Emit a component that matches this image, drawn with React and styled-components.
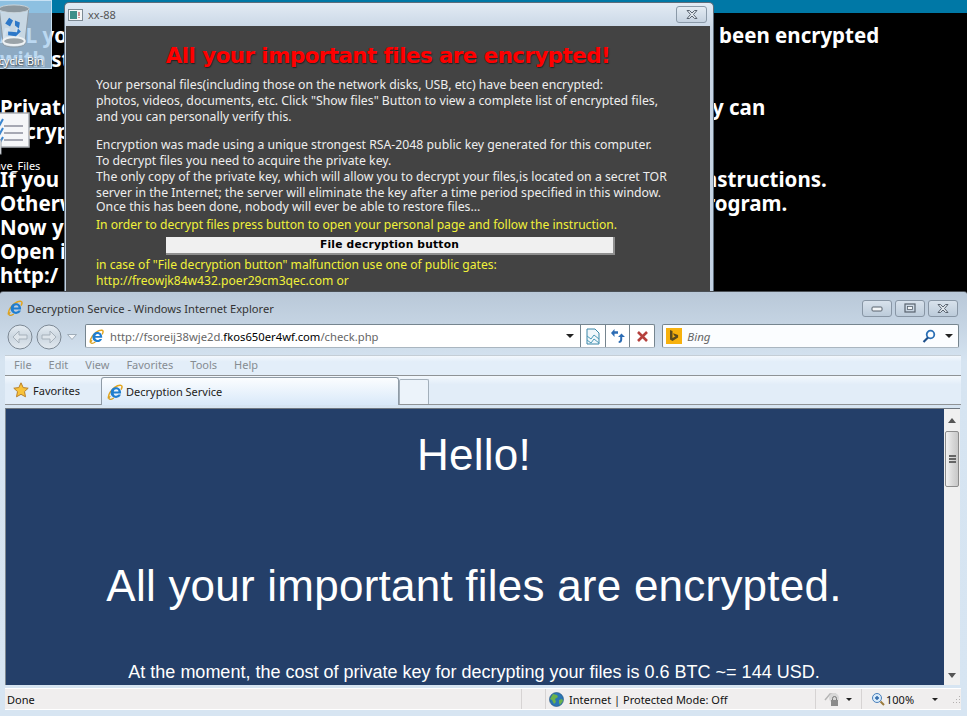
import styled, { createGlobalStyle } from 'styled-components';

const GlobalStyle = createGlobalStyle`
  html, body { margin: 0; padding: 0; background: #000; }
  * { box-sizing: border-box; }
`;

const uiFont = `'Noto Sans', 'DejaVu Sans', sans-serif`;

const Desktop = styled.div`
  position: relative;
  width: 967px;
  height: 716px;
  overflow: hidden;
  background: #000;
  font-family: ${uiFont};
`;

const TopStrip = styled.div`
  height: 13px;
  background: #0078a6;
`;

const BgLines = styled.div`
  padding-top: 10px;
  color: #fff;
  font: bold 20.5px/24px 'Noto Sans', sans-serif;
`;

const BgLine = styled.div`
  display: grid;
  grid-template-columns: 713px 1fr;
  height: 24px;
  white-space: nowrap;
`;

const BgRight = styled.span`
  margin-left: ${(props) => props.$shift || 0}px;
`;

const DesktopIcon = styled.div`
  position: absolute;
  left: ${(props) => props.$left}px;
  top: ${(props) => props.$top}px;
  width: 76px;
  height: ${(props) => props.$height}px;
  display: flex;
  flex-direction: column;
  align-items: center;
  color: #fff;
  font-size: 11px;
  line-height: 14px;
  text-shadow: 0 1px 2px #000;
  ${(props) => props.$selected && `
    background: rgba(172, 208, 238, 0.82);
    border: 1px solid rgba(205, 228, 246, 0.9);
  `}
`;

const DesktopLabel = styled.span`
  white-space: nowrap;
  margin: ${(props) => props.$gap}px 0 0 1px;
`;

const Dialog = styled.section`
  position: absolute;
  left: 64px;
  top: 2px;
  width: 650px;
  height: 289px;
  display: flex;
  flex-direction: column;
  padding: 0 3px 0 1px;
  background: linear-gradient(180deg, #e3ebf4 0, #c8d6e5 26px, #c2d1e2 100%);
  border: 1px solid #5d6c7a;
  border-bottom: 0;
  border-radius: 5px 5px 0 0;
`;

const DialogTitle = styled.header`
  flex: 0 0 23px;
  display: flex;
  align-items: center;
  gap: 5px;
  padding: 0 3px 0 2px;
  color: #555;
  font-size: 11px;
`;

const CloseBtn = styled.div`
  margin-left: auto;
  width: 31px;
  height: 17px;
  display: flex;
  align-items: center;
  justify-content: center;
  border: 1px solid #8a99a8;
  border-radius: 3px;
  background: linear-gradient(180deg, #e3ebf3, #c5d2e0);
`;

const DialogBody = styled.div`
  flex: 1;
  overflow: hidden;
  background: #434343;
  padding: 16px 0 0 30px;
  color: #eee;
  font-size: 12.27px;
  line-height: 16px;
  white-space: nowrap;
`;

const Heading = styled.h1`
  margin: 0 0 7px -30px;
  height: 28px;
  text-align: center;
  color: #f00;
  font: bold 21.4px/28px 'DejaVu Sans', sans-serif;
  letter-spacing: -0.55px;
  text-shadow: 1px 1px 1px #222;
`;

const Para = styled.p`
  margin: 0 0 ${(props) => props.$after || 0}px;
`;

const TightLine = styled.span`
  display: block;
  margin-top: -2px;
`;

const Notice = styled.p`
  margin: ${(props) => props.$before || 0}px 0 0;
  color: #f2f23a;
  font-size: 12.1px;
`;

const DecryptBtn = styled.div`
  width: 449px;
  height: 18px;
  margin: 4px 0 2px 70px;
  text-align: center;
  color: #000;
  background: #f0f0f0;
  border-right: 2px solid #8f8f8f;
  border-bottom: 2px solid #8f8f8f;
  font: bold 10.7px/16px 'DejaVu Sans', sans-serif;
  letter-spacing: 0.2px;
`;

const Browser = styled.section`
  position: absolute;
  left: 0;
  top: 291px;
  width: 967px;
  height: 425px;
  display: flex;
  flex-direction: column;
  background: linear-gradient(180deg, #b9c8d8 0, #c4d3e2 30px, #d6e4f1 70px, #d7e5f2 100%);
  border-top: 1px solid #4a4f55;
  border-radius: 3px 3px 0 0;
`;

const TitleRow = styled.div`
  flex: 0 0 30px;
  display: flex;
  align-items: center;
  gap: 4px;
  padding: 2px 9px 0 7px;
  color: #333;
  font-size: 11.15px;
`;

const WinButtons = styled.div`
  margin-left: auto;
  display: flex;
  gap: 3px;
`;

const WinBtn = styled.div`
  width: 30px;
  height: 17px;
  display: flex;
  align-items: center;
  justify-content: center;
  border: 1px solid #8896a5;
  border-radius: 3px;
  background: linear-gradient(180deg, #d8e2ec, #bccbda);
`;

const NavRow = styled.div`
  flex: 0 0 33px;
  display: flex;
  align-items: flex-start;
  padding: 2px 8px 0 7px;
`;

const NavButtons = styled.div`
  flex: 0 0 78px;
  display: flex;
  align-items: center;
  height: 25px;
`;

const AddressBar = styled.div`
  width: 571px;
  height: 24px;
  display: flex;
  align-items: center;
  background: #fff;
  border: 1px solid #76858f;
  border-bottom-color: #aab6c0;
  border-radius: 2px;
`;

const Url = styled.div`
  flex: 1;
  padding-left: 4px;
  color: #666;
  font-size: 11.25px;
  white-space: nowrap;
  & > b {
    font-weight: 400;
    color: #000;
  }
`;

const AddrCell = styled.div`
  flex: 0 0 ${(props) => props.$width}px;
  height: 100%;
  display: flex;
  align-items: center;
  justify-content: center;
  border-left: ${(props) => (props.$plain ? 'none' : '1px solid #76858f')};
`;

const SearchBar = styled.div`
  width: 297px;
  height: 24px;
  margin-left: 7px;
  display: flex;
  align-items: center;
  padding: 0 5px 0 3px;
  background: #fbfdff;
  border: 1px solid #76858f;
  border-bottom-color: #aab6c0;
  border-radius: 2px;
  color: #666;
  font-size: 11.5px;
  font-style: italic;
`;

const SearchText = styled.span`
  flex: 1;
  margin-left: 5px;
`;

const MenuRow = styled.nav`
  flex: 0 0 21px;
  margin: 0 6px 0 5px;
  display: flex;
  align-items: center;
  gap: 17px;
  padding: 0 0 2px 9px;
  background: linear-gradient(180deg, #f3f8fd 0, #e3eef9 30%, #e3eef9 100%);
  border-top: 1px solid #c5ced6;
  border-bottom: 1px solid #8f9396;
  color: #868c92;
  font-size: 11px;
`;

const TabRow = styled.div`
  flex: 0 0 29px;
  margin: 0 6px 0 5px;
  display: flex;
  align-items: flex-end;
  background: linear-gradient(180deg, #f3f8fd 0, #e2edf8 30%, #e2edf8 100%);
  border-bottom: 1px solid #8f9396;
  color: #222;
  font-size: 11px;
`;

const FavoritesBtn = styled.div`
  flex: 0 0 96px;
  align-self: center;
  display: flex;
  align-items: center;
  gap: 4px;
  padding-left: 8px;
`;

const ActiveTab = styled.div`
  width: 298px;
  height: 28px;
  margin-bottom: -1px;
  display: flex;
  align-items: center;
  gap: 3px;
  padding-left: 5px;
  border: 1px solid #8f9ba6;
  border-bottom: 0;
  border-radius: 3px 3px 0 0;
  background: linear-gradient(180deg, #fbfdff, #d9e9f9);
`;

const NewTab = styled.div`
  width: 30px;
  height: 25px;
  border: 1px solid #a3afba;
  border-bottom: 0;
  border-radius: 2px 2px 0 0;
  background: #ecf3fa;
`;

const PageRow = styled.div`
  flex: 0 0 277px;
  margin: 3px 7px 0 5px;
  display: flex;
  min-height: 0;
  border-top: 1px solid #6f7780;
  border-left: 1px solid #7d8790;
`;

const PageContent = styled.main`
  flex: 1;
  overflow: hidden;
  padding-right: 2px;
  background: #243f69;
  color: #fff;
  text-align: center;
  white-space: nowrap;
  font-family: 'Liberation Sans', Arial, sans-serif;
`;

const Hello = styled.div`
  margin-top: ${(props) => props.$top}px;
  font-size: 44px;
  line-height: 46px;
  letter-spacing: 0.23px;
`;

const Cost = styled.div`
  margin-top: 52px;
  font-size: 18px;
  line-height: 22px;
`;

const Scrollbar = styled.aside`
  flex: 0 0 16px;
  display: flex;
  flex-direction: column;
  align-items: center;
  background: #f0f0f0;
`;

const ScrollArrow = styled.div`
  flex: 0 0 ${(props) => props.$height}px;
  display: flex;
  align-items: center;
  justify-content: center;
  margin-top: auto;
  &:first-child { margin-top: 0; }
`;

const ScrollThumb = styled.div`
  width: 14px;
  height: 56px;
  display: flex;
  flex-direction: column;
  align-items: center;
  justify-content: center;
  gap: 1px;
  border: 1px solid #8c8c8c;
  border-radius: 2px;
  background: linear-gradient(90deg, #f2f2f2, #d8d8d8 55%, #c8c8c8);
  & > i {
    display: block;
    width: 7px;
    height: 2px;
    background: #666;
  }
`;

const StatusBar = styled.footer`
  flex: 0 0 22px;
  margin: 3px 6px 0 5px;
  display: flex;
  align-items: center;
  background: #f0eeee;
  border-top: 1px solid #fff;
  border-bottom: 1px solid #fff;
  color: #111;
  font-size: 11px;
`;

const StatusCell = styled.div`
  flex: 0 0 ${(props) => props.$width}px;
  height: 100%;
  display: flex;
  align-items: center;
  gap: ${(props) => props.$gap || 0}px;
  padding-left: ${(props) => props.$pad || 0}px;
  border-right: ${(props) => (props.$line ? '1px solid #d6d3d3' : 'none')};
  white-space: nowrap;
`;

const GripSlot = styled.span`
  display: flex;
  margin-left: 12px;
`;

const Caret = styled.i`
  display: block;
  width: 0;
  height: 0;
  margin-left: ${(props) => props.$left || 0}px;
  border-left: ${(props) => props.$size || 4}px solid transparent;
  border-right: ${(props) => props.$size || 4}px solid transparent;
  border-top: ${(props) => props.$size || 4}px solid ${(props) => props.$color || '#222'};
`;

const IeIcon = ({ size = 16 }) => (
  <svg width={size} height={size} viewBox="0 0 16 16" style={{ flex: 'none' }}>
    <path d="M1.500 14.500C.5 11 5 4 10.500 1.800c2.800-1 4.800-.6 4.500 1.400-.1.8-.5 1.700-1 2.500" fill="none" stroke="#e2a51d" strokeWidth="1.500" />
    <path d="M3.600 8.500C3.600 5.400 6 3.200 9 3.200c3.200 0 5.300 2.500 5.100 6.200H6.700c.1 1.500 1.200 2.300 2.500 2.300 1 0 1.800-.4 2.300-1.100h2.400c-.8 2.100-2.600 3.300-4.800 3.300-3.200 0-5.500-2.300-5.500-5.400zM6.800 7.400h4.700c-.1-1.300-1-2.100-2.300-2.100-1.300 0-2.200.8-2.400 2.100z" fill="#1f7ed0" fillRule="evenodd" />
    <path d="M3.300 11.800C1.600 14 1.400 15.300 3.200 15.300c1.100 0 2.400-.6 3.600-1.400" fill="none" stroke="#d79e1d" strokeWidth="1.200" />
  </svg>
);

const RecycleBin = () => (
  <svg width="34" height="50" viewBox="0 0 34 50">
    <path d="M2 8l4 36c1 4 21 4 22 0l4-36z" fill="#dbe6ee" fillOpacity="0.75" stroke="#8d9aa3" />
    <ellipse cx="17" cy="8" rx="15.500" ry="4" fill="#8d989f" stroke="#c8d2d8" />
    <ellipse cx="17" cy="41" rx="11" ry="4" fill="#9aa3a8" stroke="#eef2f4" strokeWidth="2" />
    <path d="M8 23l4-6 4 3-3 6zM18 20l5 2-1 6-4-3zM11 31l9 1 1-4 3 3-5 5-8-1z" fill="#2d78c8" />
  </svg>
);

const NoteIcon = () => (
  <svg width="36" height="46" viewBox="0 0 36 46">
    <rect x="-6" y="1" width="39" height="34" fill="#f5f6f8" stroke="#a9adb3" strokeWidth="1.500" />
    <path d="M8 14h19M8 21h19M8 28h19" stroke="#8c8f9c" strokeWidth="1.600" />
    <path d="M-1 12l3 4 5-9M-1 21l3 4 5-9M-1 30l3 4 5-9" stroke="#3b86cf" strokeWidth="2" fill="none" />
    <rect x="-3" y="28" width="8" height="14" fill="#fff" stroke="#9aa0a8" />
    <rect x="-3" y="30" width="6" height="8" fill="#1f5fae" />
  </svg>
);

const WinCross = () => (
  <svg width="14" height="11" viewBox="0 0 14 11">
    <path d="M2 1.500h2.500L7 4l2.500-2.500H12L8.500 5.500 12 9.500H9.500L7 7 4.500 9.500H2l3.500-4z" fill="#dfe6ed" stroke="#5a6470" strokeWidth="1" />
  </svg>
);

const NavCircle = ({ dir }) => (
  <svg width="26" height="26" viewBox="0 0 26 26" style={{ marginRight: 3, flex: 'none' }}>
    <defs>
      <linearGradient id={`nav-${dir}`} x1="0" y1="0" x2="0" y2="1">
        <stop offset="0" stopColor="#e6edf3" />
        <stop offset="0.5" stopColor="#cbd6e0" />
        <stop offset="1" stopColor="#e3eaf0" />
      </linearGradient>
    </defs>
    <circle cx="13" cy="13" r="12" fill={`url(#nav-${dir})`} stroke="#7c8894" />
    <path d={dir === 'back' ? 'M6 13l6-6v4h8v4h-8v4z' : 'M20 13l-6-6v4H6v4h8v4z'} fill="#dee5eb" stroke="#a6b1bb" />
  </svg>
);

const CompatIcon = () => (
  <svg width="16" height="17" viewBox="0 0 16 17">
    <path d="M2 1h8l4 4v11H2z" fill="#f0f7fb" stroke="#3a86a8" />
    <path d="M2 8l4 3 3-4 5 4M2 12l4 3 3-4 5 4" fill="none" stroke="#4a9ab8" />
  </svg>
);

const RefreshIcon = () => (
  <svg width="16" height="16" viewBox="0 0 16 16">
    <path d="M1 5l3.500-4v2.300H8v2.400H4.500V9zM15 9l-3.500-3.500L8 9h2.200v2.500c0 .9-.6 1.500-1.500 1.500v2c2 0 3.500-1.300 3.500-3.300V9z" fill="#2c6cb4" />
  </svg>
);

const StopIcon = () => (
  <svg width="13" height="13" viewBox="0 0 13 13">
    <path d="M2 2l9 9M11 2l-9 9" stroke="#b5413d" strokeWidth="2.600" />
  </svg>
);

const BingIcon = () => (
  <svg width="16" height="16" viewBox="0 0 16 16" style={{ flex: 'none' }}>
    <rect width="16" height="16" fill="#f7b10d" />
    <path d="M4 2l2.500 1v7l3-1.700-1.500-.8-.9-2.200 5 1.800v2.500L6.500 13 4 11.500z" fill="#5b4a1e" />
  </svg>
);

const SearchIcon = () => (
  <svg width="14" height="14" viewBox="0 0 14 14">
    <circle cx="8.500" cy="5.500" r="3.800" fill="none" stroke="#2a6fb5" strokeWidth="1.800" />
    <path d="M6 8.500L1.500 13" stroke="#1d4f8a" strokeWidth="2.200" />
  </svg>
);

const NavChevron = () => (
  <svg width="10" height="6" viewBox="0 0 10 6" style={{ marginLeft: 2, flex: 'none' }}>
    <path d="M.5.500h9L5 5.500z" fill="#f1f5f9" stroke="#a0adb9" />
  </svg>
);

const StarIcon = () => (
  <svg width="16" height="16" viewBox="0 0 16 16" style={{ flex: 'none' }}>
    <path d="M8 .8l2.200 4.800 5 .6-3.700 3.400 1 5.200L8 12.300l-4.500 2.500 1-5.200L.8 6.200l5-.6z" fill="#f8c33a" stroke="#b9802a" />
  </svg>
);

const GlobeIcon = () => (
  <svg width="15" height="15" viewBox="0 0 15 15" style={{ flex: 'none' }}>
    <circle cx="7.500" cy="7.500" r="7" fill="#2b76b4" stroke="#1f4f7c" strokeWidth="0.600" />
    <path d="M4 2l4 1 1 2-3 2 1 3-2 2-2-4-2-1zM10 8l3-1 1 2-3 4-1-2z" fill="#6cb24a" />
  </svg>
);

const LockIcon = () => (
  <svg width="17" height="15" viewBox="0 0 17 15">
    <path d="M1 8l5-6h5v3" fill="none" stroke="#b5b5b5" strokeWidth="1.500" />
    <circle cx="10" cy="6" r="5" fill="#d8d8d8" />
    <rect x="7" y="8" width="7" height="6" fill="#8b8b8b" />
    <path d="M8.500 8V6.500a2 2 0 0 1 4 0V8" fill="none" stroke="#777" />
  </svg>
);

const ZoomIcon = () => (
  <svg width="14" height="14" viewBox="0 0 14 14" style={{ flex: 'none' }}>
    <circle cx="6" cy="6" r="4.500" fill="#d9ebfa" stroke="#4a80bb" />
    <path d="M4 6h4M6 4v4" stroke="#2b66a8" strokeWidth="1.400" />
    <path d="M9.500 9.500L13 13" stroke="#9a7a3c" strokeWidth="2" />
  </svg>
);

const Grip = () => (
  <svg width="10" height="10" viewBox="0 0 10 10">
    <path d="M8 2h1v1H8zM5 5h1v1H5zM8 5h1v1H8zM2 8h1v1H2zM5 8h1v1H5zM8 8h1v1H8z" fill="#b3b0b0" />
  </svg>
);

const bgRows = [
  ['ALL yo', 'been encrypted', 6],
  ['with st'],
  [''],
  ['Private', 'y can', -1],
  ['decryp'],
  [''],
  ['If you', 'nstructions.', -9],
  ['Otherw', 'rogram.', -7],
  ['Now y'],
  ['Open i'],
  ['http:/'],
];

export default function App() {
  return (
    <Desktop>
      <GlobalStyle />
      <TopStrip />
      <BgLines>
        {bgRows.map(([left, right, shift], i) => (
          <BgLine key={i}>
            <span>{left}</span>
            {right && <BgRight $shift={shift}>{right}</BgRight>}
          </BgLine>
        ))}
      </BgLines>

      <DesktopIcon $left={-24} $top={0} $height={69} $selected>
        <RecycleBin />
        <DesktopLabel $gap={4}>Recycle Bin</DesktopLabel>
      </DesktopIcon>
      <DesktopIcon $left={-24} $top={112} $height={62}>
        <NoteIcon />
        <DesktopLabel $gap={1}>Save_Files</DesktopLabel>
      </DesktopIcon>

      <Dialog>
        <DialogTitle>
          <svg width="15" height="12" viewBox="0 0 15 12">
            <rect x="0.500" y="0.500" width="14" height="11" fill="#f4f6f7" stroke="#7d8a94" />
            <rect x="2" y="2" width="7" height="8" fill="#3f8f8a" />
            <path d="M11 3v4M11 8v1" stroke="#a33" />
          </svg>
          <span>xx-88</span>
          <CloseBtn>
            <WinCross />
          </CloseBtn>
        </DialogTitle>
        <DialogBody>
          <Heading>All your important files are encrypted!</Heading>
          <Para $after={12}>
            Your personal files(including those on the network disks, USB, etc) have been encrypted:
            <br />
            photos, videos, documents, etc. Click "Show files" Button to view a complete list of encrypted files,
            <br />
            and you can personally verify this.
          </Para>
          <Para>
            Encryption was made using a unique strongest RSA-2048 public key generated for this computer.
            <br />
            To decrypt files you need to acquire the private key.
            <br />
            The only copy of the private key, which will allow you to decrypt your files,is located on a secret TOR
            <br />
            server in the Internet; the server will eliminate the key after a time period specified in this window.
            <TightLine>Once this has been done, nobody will ever be able to restore files...</TightLine>
          </Para>
          <Notice $before={2}>In order to decrypt files press button to open your personal page and follow the instruction.</Notice>
          <DecryptBtn>File decryption button</DecryptBtn>
          <Notice>
            in case of "File decryption button" malfunction use one of public gates:
            <br />
            http://freowjk84w432.poer29cm3qec.com or
          </Notice>
        </DialogBody>
      </Dialog>

      <Browser>
        <TitleRow>
          <IeIcon />
          <span>Decryption Service - Windows Internet Explorer</span>
          <WinButtons>
            <WinBtn>
              <svg width="12" height="8" viewBox="0 0 12 8">
                <rect x="1" y="3" width="10" height="4" rx="1" fill="#f3f6f8" stroke="#59636e" />
              </svg>
            </WinBtn>
            <WinBtn>
              <svg width="12" height="10" viewBox="0 0 12 10">
                <rect x="1" y="1" width="10" height="8" fill="none" stroke="#59636e" strokeWidth="1.200" />
                <rect x="3.500" y="3.500" width="5" height="3" fill="#f3f6f8" stroke="#59636e" strokeWidth="0.800" />
              </svg>
            </WinBtn>
            <WinBtn>
              <WinCross />
            </WinBtn>
          </WinButtons>
        </TitleRow>

        <NavRow>
          <NavButtons>
            <NavCircle dir="back" />
            <NavCircle dir="fwd" />
            <NavChevron />
          </NavButtons>
          <AddressBar>
            <AddrCell $plain $width={20}>
              <IeIcon size={15} />
            </AddrCell>
            <Url>
              http://fsoreij38wje2d.<b>fkos650er4wf.com</b>/check.php
            </Url>
            <AddrCell $plain $width={21}>
              <Caret />
            </AddrCell>
            <AddrCell $width={25}>
              <CompatIcon />
            </AddrCell>
            <AddrCell $width={24}>
              <RefreshIcon />
            </AddrCell>
            <AddrCell $width={25}>
              <StopIcon />
            </AddrCell>
          </AddressBar>
          <SearchBar>
            <BingIcon />
            <SearchText>Bing</SearchText>
            <SearchIcon />
            <Caret $left={9} />
          </SearchBar>
        </NavRow>

        <MenuRow>
          <span>File</span>
          <span>Edit</span>
          <span>View</span>
          <span>Favorites</span>
          <span>Tools</span>
          <span>Help</span>
        </MenuRow>

        <TabRow>
          <FavoritesBtn>
            <StarIcon />
            <span>Favorites</span>
          </FavoritesBtn>
          <ActiveTab>
            <IeIcon />
            <span>Decryption Service</span>
          </ActiveTab>
          <NewTab />
        </TabRow>

        <PageRow>
          <PageContent>
            <Hello $top={23}>Hello!</Hello>
            <Hello $top={85}>All your important files are encrypted.</Hello>
            <Cost>At the moment, the cost of private key for decrypting your files is 0.6 BTC ~= 144 USD.</Cost>
          </PageContent>
          <Scrollbar>
            <ScrollArrow $height={22}>
              <svg width="8" height="5" viewBox="0 0 8 5"><path d="M4 0l4 5H0z" fill="#555" /></svg>
            </ScrollArrow>
            <ScrollThumb>
              <i />
              <i />
              <i />
            </ScrollThumb>
            <ScrollArrow $height={20}>
              <svg width="8" height="5" viewBox="0 0 8 5"><path d="M4 5l4-5H0z" fill="#555" /></svg>
            </ScrollArrow>
          </Scrollbar>
        </PageRow>

        <StatusBar>
          <StatusCell $width={517} $pad={2} $line>Done</StatusCell>
          <StatusCell $width={24} $line />
          <StatusCell $width={270} $pad={3} $gap={5} $line>
            <GlobeIcon />
            <span>Internet | Protected Mode: Off</span>
          </StatusCell>
          <StatusCell $width={46} $pad={8} $gap={5} $line>
            <LockIcon />
            <Caret $size={3} />
          </StatusCell>
          <StatusCell $width={94} $pad={9} $gap={1}>
            <ZoomIcon />
            <span>100%</span>
            <Caret $left={17} $size={3} />
            <GripSlot><Grip /></GripSlot>
          </StatusCell>
        </StatusBar>
      </Browser>
    </Desktop>
  );
}
